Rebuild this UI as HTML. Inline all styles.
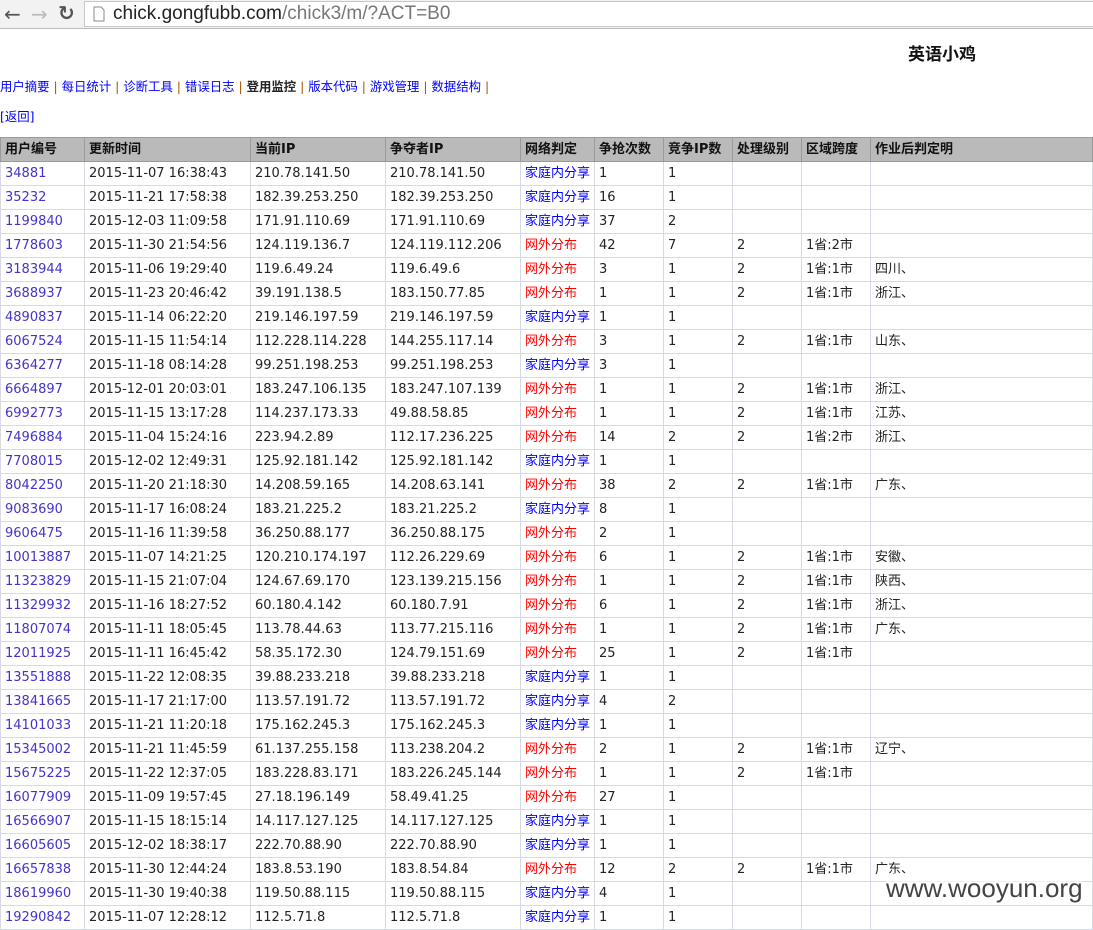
<!DOCTYPE html>
<html><head><meta charset="utf-8"><style>
body{margin:0;background:#fff;font-family:"DejaVu Sans","Noto Sans CJK SC",sans-serif;font-size:13px;color:#222;width:1093px;height:917px;overflow:hidden;position:relative}
.bar{position:absolute;left:0;top:0;width:1093px;height:28px;background:#f2f2f2;border-bottom:1px solid #bcbcbc}
.url{position:absolute;left:84px;top:1px;right:0;height:24px;background:#fff;border:1px solid #c8c8c8;border-right:none;font-family:"Liberation Sans",sans-serif;font-size:19px;line-height:24px;color:#222;padding-left:28px}
.url span{color:#777}
.title{position:absolute;left:908px;top:40px;font-size:17px;font-weight:bold;color:#111;font-family:"Noto Sans CJK SC",sans-serif}
.nav{position:absolute;left:0;top:77px;color:#00f;font-size:12.4px}
.nav b{color:#222}
.sep{color:#a50}
.back{position:absolute;left:0;top:107px;color:#00f;font-size:12.4px}
table{position:absolute;left:0;top:137px;border-collapse:collapse;table-layout:fixed;width:1093px}
td,th{height:23px;line-height:16px;padding:0 0 0 4px;border:1px solid #d6dae4;white-space:nowrap;overflow:hidden;text-align:left;font-weight:normal}
th{background:#bababa;border:1px solid #9a9a9a;font-weight:bold;color:#111}
td:first-child{color:#4433cc}
.h{color:#00f}.w{color:#f00}
.wm{position:absolute;left:886px;top:873px;font-family:"Liberation Sans",sans-serif;font-size:26px;color:#444;background:rgba(255,255,255,.6)}
</style></head><body>
<div class="bar"><div style="position:absolute;left:4px;top:2px;font-size:20px;color:#555">&#8592;</div><div style="position:absolute;left:31px;top:2px;font-size:20px;color:#bbb">&#8594;</div><div style="position:absolute;left:58px;top:1px;font-size:20px;color:#555;font-weight:bold">&#8635;</div>
<div class="url"><svg style="position:absolute;left:8px;top:4px" width="12" height="16"><path d="M1 1h7l3 3v11H1z" fill="#fff" stroke="#888"/></svg>chick.gongfubb.com<span>/chick3/m/?ACT=B0</span></div></div>
<div class="title">英语小鸡</div>
<div class="nav">用户摘要 <span class="sep">|</span> 每日统计 <span class="sep">|</span> 诊断工具 <span class="sep">|</span> 错误日志 <span class="sep">|</span> <b>登用监控</b> <span class="sep">|</span> 版本代码 <span class="sep">|</span> 游戏管理 <span class="sep">|</span> 数据结构 <span class="sep">|</span></div>
<div class="back">[返回]</div>
<table>
<colgroup><col style="width:84px"><col style="width:166px"><col style="width:135px"><col style="width:135px"><col style="width:74px"><col style="width:69px"><col style="width:69px"><col style="width:69px"><col style="width:69px"><col></colgroup>
<tr><th>用户编号</th><th>更新时间</th><th>当前IP</th><th>争夺者IP</th><th>网络判定</th><th>争抢次数</th><th>竞争IP数</th><th>处理级别</th><th>区域跨度</th><th>作业后判定明</th></tr>
<tr><td>34881</td><td>2015-11-07 16:38:43</td><td>210.78.141.50</td><td>210.78.141.50</td><td class="h">家庭内分享</td><td>1</td><td>1</td><td></td><td></td><td></td></tr>
<tr><td>35232</td><td>2015-11-21 17:58:38</td><td>182.39.253.250</td><td>182.39.253.250</td><td class="h">家庭内分享</td><td>16</td><td>1</td><td></td><td></td><td></td></tr>
<tr><td>1199840</td><td>2015-12-03 11:09:58</td><td>171.91.110.69</td><td>171.91.110.69</td><td class="h">家庭内分享</td><td>37</td><td>2</td><td></td><td></td><td></td></tr>
<tr><td>1778603</td><td>2015-11-30 21:54:56</td><td>124.119.136.7</td><td>124.119.112.206</td><td class="w">网外分布</td><td>42</td><td>7</td><td>2</td><td>1省:2市</td><td></td></tr>
<tr><td>3183944</td><td>2015-11-06 19:29:40</td><td>119.6.49.24</td><td>119.6.49.6</td><td class="w">网外分布</td><td>3</td><td>1</td><td>2</td><td>1省:1市</td><td>四川、</td></tr>
<tr><td>3688937</td><td>2015-11-23 20:46:42</td><td>39.191.138.5</td><td>183.150.77.85</td><td class="w">网外分布</td><td>1</td><td>1</td><td>2</td><td>1省:1市</td><td>浙江、</td></tr>
<tr><td>4890837</td><td>2015-11-14 06:22:20</td><td>219.146.197.59</td><td>219.146.197.59</td><td class="h">家庭内分享</td><td>1</td><td>1</td><td></td><td></td><td></td></tr>
<tr><td>6067524</td><td>2015-11-15 11:54:14</td><td>112.228.114.228</td><td>144.255.117.14</td><td class="w">网外分布</td><td>3</td><td>1</td><td>2</td><td>1省:1市</td><td>山东、</td></tr>
<tr><td>6364277</td><td>2015-11-18 08:14:28</td><td>99.251.198.253</td><td>99.251.198.253</td><td class="h">家庭内分享</td><td>3</td><td>1</td><td></td><td></td><td></td></tr>
<tr><td>6664897</td><td>2015-12-01 20:03:01</td><td>183.247.106.135</td><td>183.247.107.139</td><td class="w">网外分布</td><td>1</td><td>1</td><td>2</td><td>1省:1市</td><td>浙江、</td></tr>
<tr><td>6992773</td><td>2015-11-15 13:17:28</td><td>114.237.173.33</td><td>49.88.58.85</td><td class="w">网外分布</td><td>1</td><td>1</td><td>2</td><td>1省:1市</td><td>江苏、</td></tr>
<tr><td>7496884</td><td>2015-11-04 15:24:16</td><td>223.94.2.89</td><td>112.17.236.225</td><td class="w">网外分布</td><td>14</td><td>2</td><td>2</td><td>1省:2市</td><td>浙江、</td></tr>
<tr><td>7708015</td><td>2015-12-02 12:49:31</td><td>125.92.181.142</td><td>125.92.181.142</td><td class="h">家庭内分享</td><td>1</td><td>1</td><td></td><td></td><td></td></tr>
<tr><td>8042250</td><td>2015-11-20 21:18:30</td><td>14.208.59.165</td><td>14.208.63.141</td><td class="w">网外分布</td><td>38</td><td>2</td><td>2</td><td>1省:1市</td><td>广东、</td></tr>
<tr><td>9083690</td><td>2015-11-17 16:08:24</td><td>183.21.225.2</td><td>183.21.225.2</td><td class="h">家庭内分享</td><td>8</td><td>1</td><td></td><td></td><td></td></tr>
<tr><td>9606475</td><td>2015-11-16 11:39:58</td><td>36.250.88.177</td><td>36.250.88.175</td><td class="w">网外分布</td><td>2</td><td>1</td><td></td><td></td><td></td></tr>
<tr><td>10013887</td><td>2015-11-07 14:21:25</td><td>120.210.174.197</td><td>112.26.229.69</td><td class="w">网外分布</td><td>6</td><td>1</td><td>2</td><td>1省:1市</td><td>安徽、</td></tr>
<tr><td>11323829</td><td>2015-11-15 21:07:04</td><td>124.67.69.170</td><td>123.139.215.156</td><td class="w">网外分布</td><td>1</td><td>1</td><td>2</td><td>1省:1市</td><td>陕西、</td></tr>
<tr><td>11329932</td><td>2015-11-16 18:27:52</td><td>60.180.4.142</td><td>60.180.7.91</td><td class="w">网外分布</td><td>6</td><td>1</td><td>2</td><td>1省:1市</td><td>浙江、</td></tr>
<tr><td>11807074</td><td>2015-11-11 18:05:45</td><td>113.78.44.63</td><td>113.77.215.116</td><td class="w">网外分布</td><td>1</td><td>1</td><td>2</td><td>1省:1市</td><td>广东、</td></tr>
<tr><td>12011925</td><td>2015-11-11 16:45:42</td><td>58.35.172.30</td><td>124.79.151.69</td><td class="w">网外分布</td><td>25</td><td>1</td><td>2</td><td>1省:1市</td><td></td></tr>
<tr><td>13551888</td><td>2015-11-22 12:08:35</td><td>39.88.233.218</td><td>39.88.233.218</td><td class="h">家庭内分享</td><td>1</td><td>1</td><td></td><td></td><td></td></tr>
<tr><td>13841665</td><td>2015-11-17 21:17:00</td><td>113.57.191.72</td><td>113.57.191.72</td><td class="h">家庭内分享</td><td>4</td><td>2</td><td></td><td></td><td></td></tr>
<tr><td>14101033</td><td>2015-11-21 11:20:18</td><td>175.162.245.3</td><td>175.162.245.3</td><td class="h">家庭内分享</td><td>1</td><td>1</td><td></td><td></td><td></td></tr>
<tr><td>15345002</td><td>2015-11-21 11:45:59</td><td>61.137.255.158</td><td>113.238.204.2</td><td class="w">网外分布</td><td>2</td><td>1</td><td>2</td><td>1省:1市</td><td>辽宁、</td></tr>
<tr><td>15675225</td><td>2015-11-22 12:37:05</td><td>183.228.83.171</td><td>183.226.245.144</td><td class="w">网外分布</td><td>1</td><td>1</td><td>2</td><td>1省:1市</td><td></td></tr>
<tr><td>16077909</td><td>2015-11-09 19:57:45</td><td>27.18.196.149</td><td>58.49.41.25</td><td class="w">网外分布</td><td>27</td><td>1</td><td></td><td></td><td></td></tr>
<tr><td>16566907</td><td>2015-11-15 18:15:14</td><td>14.117.127.125</td><td>14.117.127.125</td><td class="h">家庭内分享</td><td>1</td><td>1</td><td></td><td></td><td></td></tr>
<tr><td>16605605</td><td>2015-12-02 18:38:17</td><td>222.70.88.90</td><td>222.70.88.90</td><td class="h">家庭内分享</td><td>1</td><td>1</td><td></td><td></td><td></td></tr>
<tr><td>16657838</td><td>2015-11-30 12:44:24</td><td>183.8.53.190</td><td>183.8.54.84</td><td class="w">网外分布</td><td>12</td><td>2</td><td>2</td><td>1省:1市</td><td>广东、</td></tr>
<tr><td>18619960</td><td>2015-11-30 19:40:38</td><td>119.50.88.115</td><td>119.50.88.115</td><td class="h">家庭内分享</td><td>4</td><td>1</td><td></td><td></td><td></td></tr>
<tr><td>19290842</td><td>2015-11-07 12:28:12</td><td>112.5.71.8</td><td>112.5.71.8</td><td class="h">家庭内分享</td><td>1</td><td>1</td><td></td><td></td><td></td></tr>
</table>
<div class="wm">www.wooyun.org</div>
</body></html>
